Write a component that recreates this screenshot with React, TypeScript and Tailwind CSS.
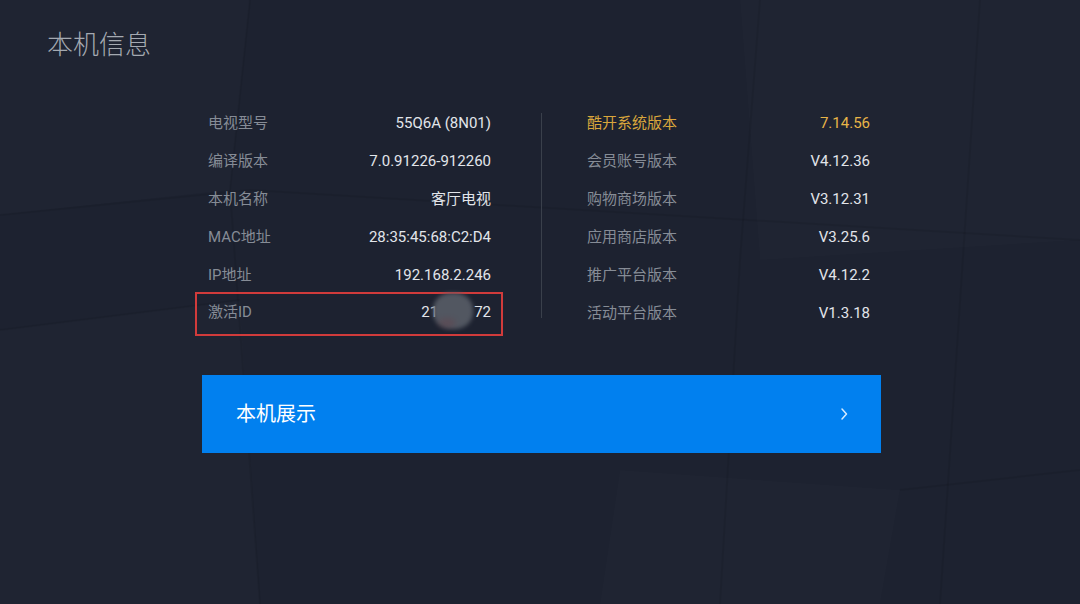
const leftRows = [
  { label: '电视型号', value: '55Q6A (8N01)' },
  { label: '编译版本', value: '7.0.91226-912260' },
  { label: '本机名称', value: '客厅电视' },
  { label: 'MAC地址', value: '28:35:45:68:C2:D4' },
  { label: 'IP地址', value: '192.168.2.246' },
]

const rightRows = [
  { label: '酷开系统版本', value: '7.14.56', highlight: true },
  { label: '会员账号版本', value: 'V4.12.36' },
  { label: '购物商场版本', value: 'V3.12.31' },
  { label: '应用商店版本', value: 'V3.25.6' },
  { label: '推广平台版本', value: 'V4.12.2' },
  { label: '活动平台版本', value: 'V1.3.18' },
]

function Backdrop() {
  return (
    <svg
      className="absolute inset-0 h-full w-full"
      viewBox="0 0 1080 604"
      preserveAspectRatio="none"
    >
      <g fill="#ffffff" fillOpacity="0.012">
        <polygon points="0,0 250,0 230,190 0,215" />
        <polygon points="740,0 1080,0 1080,240 760,260" />
        <polygon points="0,330 240,300 260,604 0,604" />
        <polygon points="620,470 900,490 880,604 600,604" />
      </g>
      <g stroke="#000000" strokeOpacity="0.07" strokeWidth="2" fill="none">
        <path d="M0 215 L250 190 L1080 240" />
        <path d="M250 0 L230 190 L260 604" />
        <path d="M760 0 L740 260 L720 604" />
        <path d="M0 330 L240 300" />
        <path d="M900 490 L1080 470" />
        <path d="M980 0 L940 604" />
      </g>
    </svg>
  )
}

function InfoRow({
  label,
  value,
  highlight,
}: {
  label: string
  value: string
  highlight?: boolean
}) {
  return (
    <div className="flex h-[38px] items-center justify-between">
      <span className={highlight ? 'text-[#d9a63c]' : 'text-[#868c96]'}>
        {label}
      </span>
      <span className={highlight ? 'text-[#e8b548]' : 'text-[#e2e5ea]'}>
        {value}
      </span>
    </div>
  )
}

export default function App() {
  return (
    <div
      className="relative h-[604px] w-[1080px] overflow-hidden bg-[#1d2230]"
      style={{ fontFamily: 'Roboto, "Noto Sans CJK SC", sans-serif' }}
    >
      <Backdrop />
      <div className="relative flex flex-col">
        <h1 className="pl-[47px] pt-[31px] text-[26px] leading-[28px] font-light text-[#a4a9b1]">
          本机信息
        </h1>

        <div className="mt-[45px] ml-[195px] flex text-[15px]">
          <div className="flex w-[308px] flex-col">
            {leftRows.map((row) => (
              <div key={row.label} className="px-[13px] pr-[12px]">
                <InfoRow label={row.label} value={row.value} />
              </div>
            ))}
            <div className="-mt-[2px] flex h-[44px] items-center justify-between border-2 border-[#d13b3b] pb-1 pl-[11px] pr-[10px]">
              <span className="text-[#868c96]">激活ID</span>
              <span className="relative flex items-center text-[#e2e5ea]">
                21
                <span className="inline-block w-[36px]" />
                72
                <span className="absolute left-[12px] -top-[8px] h-[36px] w-[40px] rounded-[45%] bg-[#555a64] opacity-95 blur-[2px]" />
                <span className="absolute left-[18px] top-[18px] h-[8px] w-[16px] rounded-full bg-[#6a3a44] opacity-40 blur-[3px]" />
              </span>
            </div>
          </div>

          <div className="ml-[38px] mt-[9px] h-[205px] w-px bg-[#3a404b]" />

          <div className="ml-[45px] flex w-[283px] flex-col">
            {rightRows.map((row) => (
              <InfoRow
                key={row.label}
                label={row.label}
                value={row.value}
                highlight={row.highlight}
              />
            ))}
          </div>
        </div>

        <button className="mt-[39px] ml-[202px] flex h-[78px] w-[679px] items-center justify-between bg-[#0180ef] pl-[34px] pr-[32px] text-left">
          <span className="text-[20px] text-white">本机展示</span>
          <svg width="10" height="16" viewBox="0 0 10 16" fill="none">
            <path
              d="M3 3 L7.5 8 L3 13"
              stroke="#d6ebff"
              strokeWidth="1.5"
              strokeLinecap="round"
              strokeLinejoin="round"
            />
          </svg>
        </button>
      </div>
    </div>
  )
}
